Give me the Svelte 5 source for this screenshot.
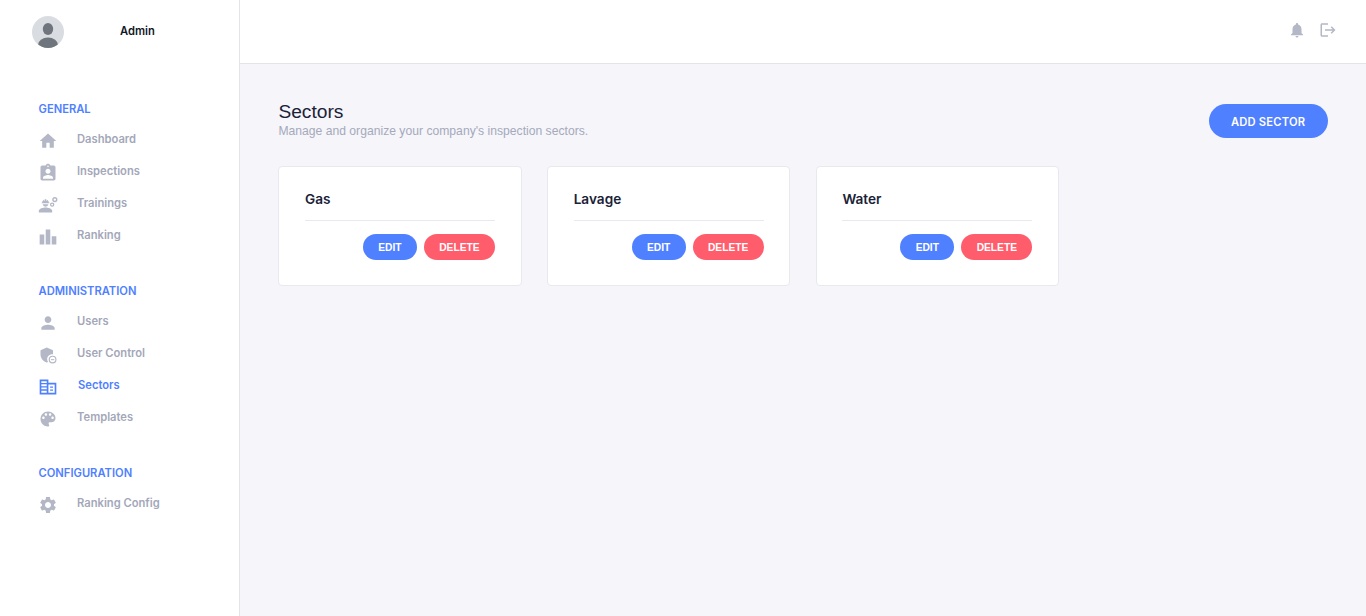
<script>
  const sections = [
    { title: 'GENERAL', items: [
      { label: 'Dashboard', icon: 'home' },
      { label: 'Inspections', icon: 'badge' },
      { label: 'Trainings', icon: 'worker' },
      { label: 'Ranking', icon: 'bars' }
    ]},
    { title: 'ADMINISTRATION', items: [
      { label: 'Users', icon: 'user' },
      { label: 'User Control', icon: 'shield' },
      { label: 'Sectors', icon: 'sectors', active: true },
      { label: 'Templates', icon: 'palette' }
    ]},
    { title: 'CONFIGURATION', items: [
      { label: 'Ranking Config', icon: 'gear' }
    ]}
  ];

  const sectors = ['Gas', 'Lavage', 'Water'];
</script>

<div class="layout">
  <aside class="sidebar">
    <div class="profile">
      <svg class="avatar" viewBox="0 0 32 32">
        <defs><clipPath id="round"><circle cx="16" cy="16" r="16" /></clipPath></defs>
        <circle cx="16" cy="16" r="16" fill="#d9dce1" />
        <g clip-path="url(#round)" fill="#6e757d">
          <ellipse cx="16" cy="13" rx="5.2" ry="6" />
          <ellipse cx="16" cy="29" rx="10" ry="7.5" />
        </g>
      </svg>
      <span class="name">Admin</span>
    </div>

    {#each sections as section}
      <section class="group">
        <h4>{section.title}</h4>
        {#each section.items as item}
          <a class="item" class:active={item.active} href="#top">
            <svg class="icon" viewBox="0 0 24 24" fill="currentColor">
              {#if item.icon === 'home'}
                <path d="M10 20v-6h4v6h5v-8h3L12 3 2 12h3v8z" />
              {:else if item.icon === 'badge'}
                <path d="M19 3h-4.180C14.400 1.840 13.300 1 12 1c-1.300 0-2.400.84-2.820 2H5c-1.100 0-2 .9-2 2v14c0 1.100.9 2 2 2h14c1.100 0 2-.9 2-2V5c0-1.100-.9-2-2-2zm-7 0c.55 0 1 .45 1 1s-.45 1-1 1-1-.45-1-1 .45-1 1-1zm0 4c1.660 0 3 1.340 3 3s-1.340 3-3 3-3-1.340-3-3 1.340-3 3-3zm6 12H6v-1.400c0-2 4-3.100 6-3.100s6 1.100 6 3.100V19z" />
              {:else if item.icon === 'worker'}
                <path d="M9 15c-2.670 0-8 1.340-8 4v2h16v-2c0-2.660-5.330-4-8-4z" />
                <path d="M4.740 10H13.260c.27 0 .49-.22.49-.49v-.02c0-.27-.22-.49-.49-.49H13c0-1.480-.81-2.750-2-3.450v.95c0 .28-.22.5-.5.5s-.5-.22-.5-.5V5.140C9.680 5.060 9.350 5 9 5s-.68.06-1 .14V6.500c0 .28-.22.5-.5.5S7 6.780 7 6.500v-.95C5.810 6.250 5 7.520 5 9h-.26c-.27 0-.49.22-.49.49v.03c0 .26.22.48.49.48z" />
                <path d="M5.500 11.200h7A3.600 3.600 0 0 1 9 14 3.600 3.600 0 0 1 5.500 11.200z" />
                <circle cx="20.200" cy="5.500" r="2.300" fill="none" stroke="currentColor" stroke-width="1.700" />
                <circle cx="17" cy="11.500" r="1.900" fill="none" stroke="currentColor" stroke-width="1.500" />
              {:else if item.icon === 'bars'}
                <path d="M7.500 21H2V9h5.500v12zm7.250-18h-5.500v18h5.500V3zM22 11h-5.500v10H22V11z" />
              {:else if item.icon === 'user'}
                <path d="M12 12c2.210 0 4-1.790 4-4s-1.790-4-4-4-4 1.790-4 4 1.790 4 4 4zm0 2c-2.670 0-8 1.340-8 4v2h16v-2c0-2.660-5.330-4-8-4z" />
              {:else if item.icon === 'shield'}
                <path d="M17 11c.34 0 .67.04 1 .09V6.270L10.500 3 3 6.270v4.910c0 4.540 3.200 8.790 7.500 9.820.55-.13 1.080-.32 1.600-.55-.69-.98-1.100-2.170-1.100-3.450 0-3.310 2.690-6 6-6z" />
                <circle cx="17.500" cy="17.500" r="4" fill="none" stroke="currentColor" stroke-width="1.400" />
                <path d="M15.500 17h4v1.200h-4z" />
              {:else if item.icon === 'sectors'}
                <path fill-rule="evenodd" d="M2 3h10.500v4H22v14H2zM4 5v2.200h6.500V5zm0 3.800V11h6.500V8.800zm0 3.800v2.200h6.500v-2.200zm0 3.800v2.600h6.500v-2.600zM12.500 9v10H20V9zm2 2.400h3.500v1.600h-3.500zm0 3.600h3.500v1.600h-3.500z" />
              {:else if item.icon === 'palette'}
                <path d="M12 3c-4.970 0-9 4.030-9 9s4.030 9 9 9c.83 0 1.500-.67 1.500-1.500 0-.39-.15-.74-.39-1.010-.23-.26-.38-.61-.38-.99 0-.83.67-1.500 1.500-1.500H16c2.760 0 5-2.240 5-5 0-4.420-4.030-8-9-8zm-5.500 9c-.83 0-1.500-.67-1.500-1.500S5.670 9 6.500 9 8 9.670 8 10.500 7.330 12 6.500 12zm3-4C8.670 8 8 7.330 8 6.500S8.670 5 9.500 5s1.500.67 1.500 1.500S10.330 8 9.500 8zm5 0c-.83 0-1.500-.67-1.500-1.500S13.670 5 14.500 5s1.500.67 1.500 1.500S15.330 8 14.500 8zm3 4c-.83 0-1.500-.67-1.500-1.500S16.670 9 17.500 9s1.500.67 1.500 1.500-.67 1.500-1.500 1.500z" />
              {:else}
                <path d="M19.140 12.940c.04-.3.06-.61.06-.94 0-.32-.02-.64-.07-.94l2.030-1.580c.18-.14.23-.41.12-.61l-1.920-3.320c-.12-.22-.37-.29-.59-.22l-2.390.96c-.5-.38-1.030-.7-1.620-.94l-.36-2.540c-.04-.24-.24-.41-.48-.41h-3.840c-.24 0-.43.17-.47.41l-.36 2.540c-.59.24-1.130.57-1.620.94l-2.390-.96c-.22-.08-.47 0-.59.22L2.740 8.870c-.12.21-.08.47.12.61l2.030 1.580c-.05.3-.09.63-.09.94s.02.64.07.94l-2.030 1.580c-.18.14-.23.41-.12.61l1.920 3.320c.12.22.37.29.59.22l2.390-.96c.5.38 1.030.7 1.620.94l.36 2.540c.05.24.24.41.48.41h3.840c.24 0 .44-.17.47-.41l.36-2.540c.59-.24 1.130-.56 1.620-.94l2.390.96c.22.08.47 0 .59-.22l1.920-3.320c.12-.22.07-.47-.12-.61l-2.010-1.580zM12 15.600c-1.980 0-3.600-1.620-3.600-3.600s1.620-3.600 3.600-3.600 3.600 1.620 3.600 3.600-1.620 3.600-3.600 3.600z" />
              {/if}
            </svg>
            <span>{item.label}</span>
          </a>
        {/each}
      </section>
    {/each}
  </aside>

  <div class="main">
    <header class="topbar">
      <svg class="top-icon" viewBox="0 0 24 24" fill="currentColor">
        <path d="M12 22c1.100 0 2-.9 2-2h-4c0 1.100.89 2 2 2zm6-6v-5c0-3.070-1.640-5.640-4.500-6.320V4c0-.83-.67-1.500-1.500-1.500s-1.500.67-1.500 1.500v.68C7.630 5.360 6 7.920 6 11v5l-2 2v1h16v-1l-2-2z" />
      </svg>
      <svg class="top-icon" viewBox="0 0 24 24" fill="currentColor">
        <path d="M17 7l-1.410 1.410L18.170 11H8v2h10.170l-2.580 2.580L17 17l5-5zM4 5h8V3H4c-1.100 0-2 .9-2 2v14c0 1.100.9 2 2 2h8v-2H4V5z" />
      </svg>
    </header>

    <main class="content">
      <div class="heading">
        <div>
          <h1>Sectors</h1>
          <p>Manage and organize your company's inspection sectors.</p>
        </div>
        <button class="btn add">ADD SECTOR</button>
      </div>

      <div class="cards">
        {#each sectors as sector}
          <div class="card">
            <h3>{sector}</h3>
            <div class="actions">
              <button class="btn edit">EDIT</button>
              <button class="btn delete">DELETE</button>
            </div>
          </div>
        {/each}
      </div>
    </main>
  </div>
</div>

<style>
  :global(body) {
    margin: 0;
    background: #f5f5fa;
    font-family: 'Liberation Sans', Arial, sans-serif;
  }

  .layout {
    display: flex;
    height: 616px;
    overflow: hidden;
  }

  .sidebar {
    width: 239px;
    flex-shrink: 0;
    background: #fff;
    border-right: 1px solid #e3e4ea;
    font-family: Inter, sans-serif;
  }

  .profile {
    display: flex;
    align-items: center;
    height: 32px;
    padding: 16px 0 0 32px;
  }

  .avatar {
    width: 32px;
    height: 32px;
  }

  .name {
    margin-left: 56px;
    margin-top: -2px;
    font-size: 11.2px;
    font-weight: 600;
    color: #101828;
  }

  .group {
    padding-left: 38.5px;
    margin-bottom: 33px;
  }

  .group:first-of-type {
    margin-top: 54px;
  }

  h4 {
    margin: 0 0 7px;
    height: 14px;
    line-height: 14px;
    font-size: 11.2px;
    font-weight: 600;
    color: #4f80ff;
  }

  .item {
    display: flex;
    align-items: center;
    height: 32px;
    text-decoration: none;
    color: #a3a7b9;
    font-size: 11.2px;
    font-weight: 600;
  }

  .item .icon {
    width: 20px;
    height: 20px;
    flex-shrink: 0;
    margin: 3px 19px 0 -0.5px;
    color: #b4b8c6;
  }

  .item.active {
    color: #4f80ff;
  }

  .item.active .icon {
    color: #4f80ff;
    margin-right: 20px;
  }

  .main {
    flex: 1;
    min-width: 0;
  }

  .topbar {
    display: flex;
    justify-content: flex-end;
    align-items: center;
    gap: 12.5px;
    height: 63px;
    padding-right: 29.5px;
    background: #fff;
    border-bottom: 1px solid #e3e4ea;
  }

  .top-icon {
    width: 18px;
    height: 18px;
    margin-top: -4px;
    color: #b4b8c6;
  }

  .content {
    padding: 37px 38.4px 0;
  }

  .heading {
    display: flex;
    justify-content: space-between;
    align-items: flex-start;
  }

  h1 {
    margin: 0;
    font-size: 19.2px;
    line-height: 22px;
    font-weight: 400;
    color: #1a2238;
  }

  p {
    margin: 1px 0 0;
    font-size: 12.16px;
    line-height: 14px;
    color: #a5a9ba;
  }

  .btn {
    border: none;
    border-radius: 20px;
    color: #fff;
    font-weight: 700;
    font-family: 'Liberation Sans', Arial, sans-serif;
    padding: 0;
  }

  .add {
    width: 119px;
    height: 34px;
    margin-top: 3px;
    padding-top: 1px;
    font-family: Inter, sans-serif;
    font-size: 11.2px;
    font-weight: 600;
    letter-spacing: 0.2px;
    background: #4f80ff;
  }

  .cards {
    display: grid;
    grid-template-columns: repeat(4, 1fr);
    gap: 25.6px;
    margin-top: 28px;
  }

  .card {
    height: 120px;
    box-sizing: border-box;
    padding: 24px 25.6px 0;
    background: #fff;
    border: 1px solid #e8e9ef;
    border-radius: 4px;
  }

  h3 {
    margin: 0;
    height: 29px;
    line-height: 17px;
    font-family: Inter, sans-serif;
    font-size: 13.6px;
    font-weight: 600;
    color: #1a2238;
    border-bottom: 1px solid #e8e9ef;
  }

  .actions {
    display: flex;
    justify-content: flex-end;
    gap: 7px;
    margin-top: 13px;
  }

  .edit,
  .delete {
    height: 26px;
    font-size: 10.24px;
  }

  .edit {
    width: 54px;
    background: #4f80ff;
  }

  .delete {
    width: 71px;
    background: #ff5c6c;
  }
</style>
